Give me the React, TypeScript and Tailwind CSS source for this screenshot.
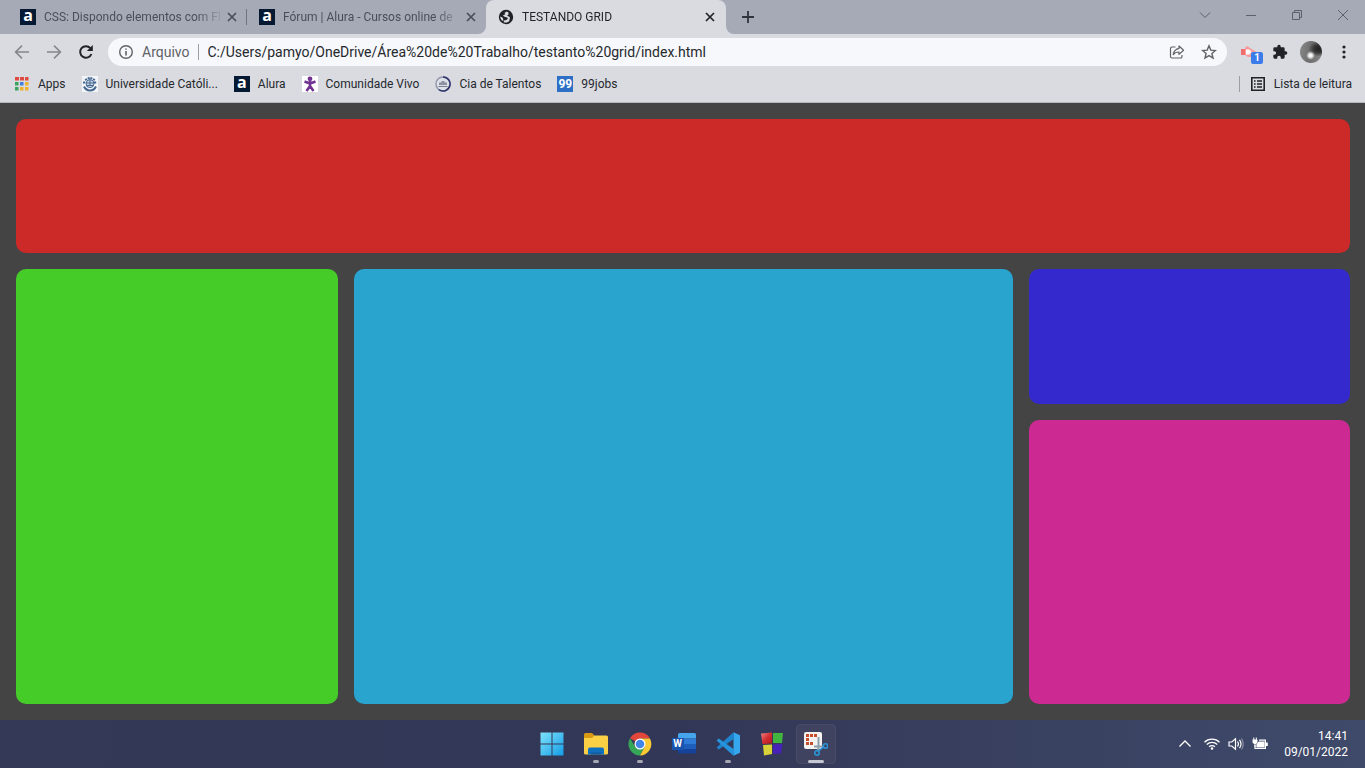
import type { ReactNode } from "react";

function AluraIcon() {
  return (
    <span className="flex h-4 w-4 shrink-0 items-center justify-center bg-[#051933] font-['Open_Sans',sans-serif] text-base leading-4 font-bold text-white">
      <span className="-mt-1">a</span>
    </span>
  );
}

function GlobeIcon() {
  return (
    <svg viewBox="0 0 16 16" className="h-4 w-4 shrink-0">
      <circle cx="8" cy="8" r="7.2" fill="#1f2227" />
      <path d="M8.8 2.6 6.4 4 7.4 5.2 4.8 6.6 7 8 9.4 8.6 9.8 10 7.8 11.2 5.4 11.4 6.2 13.4 9 13.6 11.2 12.2 11.6 10.2 12 8.6 10.4 7.2 9 6.6 10.6 5.4 10.4 3.6Z" fill="#d9dbe1" />
      <path d="M2.2 7.6 4.4 8.4 5.4 10.2 4.4 12C3 11 2.3 9.4 2.2 7.6Z" fill="#d9dbe1" />
    </svg>
  );
}

function CloseIcon() {
  return (
    <svg viewBox="0 0 10 10" className="h-[10px] w-[10px]" stroke="currentColor" strokeWidth="1.7">
      <path d="M1 1 9 9M9 1 1 9" />
    </svg>
  );
}

function Tab({ icon, title, active }: { icon: ReactNode; title: string; active?: boolean }) {
  return (
    <div
      className={
        active
          ? "relative flex h-[34px] w-[240px] items-center rounded-t-lg bg-[#d9dbe1] pr-[11px] pl-3 text-[#1f2227]"
          : "flex h-[34px] w-[239px] items-center pr-[10px] pl-3 text-[#4a4e59]"
      }
    >
      {icon}
      <button
        role="tab"
        aria-selected={!!active}
        className="ml-2 min-w-0 flex-1 text-left text-xs whitespace-nowrap [mask-image:linear-gradient(to_right,black_152px,transparent_180px)]"
      >
        {title}
      </button>
      <button aria-label="Fechar guia" className="ml-1 flex h-4 w-[10px] items-center justify-center">
        <CloseIcon />
      </button>
      {active && (
        <>
          <svg viewBox="0 0 8 8" className="absolute bottom-0 -left-2 h-2 w-2" fill="#d9dbe1">
            <path d="M8 0V8H0A8 8 0 0 0 8 0Z" />
          </svg>
          <svg viewBox="0 0 8 8" className="absolute -right-2 bottom-0 h-2 w-2" fill="#d9dbe1">
            <path d="M0 0V8H8A8 8 0 0 1 0 0Z" />
          </svg>
        </>
      )}
    </div>
  );
}

function TabStrip() {
  return (
    <div className="flex h-[34px] shrink-0 items-center bg-[#a6aab7] pl-2">
      <div role="tablist" className="flex items-center">
        <Tab icon={<AluraIcon />} title="CSS: Dispondo elementos com Fl" />
        <div className="-ml-px h-4 w-px bg-[#70747f]" />
        <Tab icon={<AluraIcon />} title="Fórum | Alura - Cursos online de" />
        <Tab icon={<GlobeIcon />} title="TESTANDO GRID" active />
      </div>
      <button aria-label="Nova guia" className="ml-4 text-[#30333b]">
        <svg viewBox="0 0 12 12" className="h-3 w-3" stroke="currentColor" strokeWidth="1.8">
          <path d="M6 0V12M0 6H12" />
        </svg>
      </button>
      <div className="mr-4 mb-1 ml-auto flex items-center gap-[34px] text-[#5c606b]">
        <button aria-label="Pesquisar guias">
          <svg viewBox="0 0 12 12" className="h-3 w-3" fill="none" stroke="currentColor">
            <path d="M1 3.5 6 8.5 11 3.5" />
          </svg>
        </button>
        <button aria-label="Minimizar">
          <svg viewBox="0 0 12 12" className="h-3 w-3" stroke="currentColor">
            <path d="M1 6.5H11" />
          </svg>
        </button>
        <button aria-label="Restaurar">
          <svg viewBox="0 0 12 12" className="h-3 w-3" fill="none" stroke="currentColor">
            <path d="M1.5 3.5H8.5V10.5H1.5ZM3.5 3.5V1.5H10.5V8.5H8.5" />
          </svg>
        </button>
        <button aria-label="Fechar">
          <svg viewBox="0 0 12 12" className="h-3 w-3" stroke="currentColor">
            <path d="M1 1 11 11M11 1 1 11" />
          </svg>
        </button>
      </div>
    </div>
  );
}

function Toolbar() {
  return (
    <div className="flex h-9 shrink-0 items-center bg-[#d9dbe1] pr-[13px] pl-[14px]">
      <div className="flex items-center gap-4">
        <button aria-label="Voltar" className="text-[#85878d]">
          <svg viewBox="0 0 16 16" className="h-4 w-4" fill="none" stroke="currentColor" strokeWidth="1.6">
            <path d="M15 8H2M8 1.6 1.6 8 8 14.4" />
          </svg>
        </button>
        <button aria-label="Avançar" className="text-[#85878d]">
          <svg viewBox="0 0 16 16" className="h-4 w-4" fill="none" stroke="currentColor" strokeWidth="1.6">
            <path d="M1 8H14M8 1.6 14.4 8 8 14.4" />
          </svg>
        </button>
        <button aria-label="Atualizar" className="text-[#1f2227]">
          <svg viewBox="0 0 16 16" className="h-4 w-4" fill="none" stroke="currentColor" strokeWidth="2">
            <path d="M13.4 10A5.8 5.8 0 1 1 12.4 4.2" />
            <path d="M14.8 1V7H8.8Z" fill="currentColor" stroke="none" />
          </svg>
        </button>
      </div>
      <div className="ml-[14px] flex h-7 min-w-0 flex-1 items-center rounded-full bg-[#f7f8fb] pr-[10px] pl-[10px] text-sm text-[#5f6267]">
        <svg viewBox="0 0 16 16" className="h-4 w-4" fill="none" stroke="currentColor" strokeWidth="1.4">
          <circle cx="8" cy="8" r="6.3" />
          <path d="M8 7V11.4M8 4.4V5.8" strokeWidth="1.6" />
        </svg>
        <label htmlFor="address" className="ml-2">Arquivo</label>
        <div className="ml-2 h-4 w-px bg-[#9b9ea5]" />
        <input
          id="address"
          className="ml-[9px] min-w-0 flex-1 bg-transparent text-[#25282d] outline-none"
          defaultValue="C:/Users/pamyo/OneDrive/Área%20de%20Trabalho/testanto%20grid/index.html"
        />
        <button aria-label="Compartilhar">
          <svg viewBox="0 0 16 16" className="h-4 w-4" fill="none" stroke="currentColor" strokeWidth="1.2" strokeLinejoin="round">
            <path d="M6.5 3H3A1.6 1.6 0 0 0 1.5 4.6V12.4A1.6 1.6 0 0 0 3 14H11.4A1.6 1.6 0 0 0 13 12.4V11" />
            <path d="M10 2 14.6 6.2 10 10.4V8C7.4 8 5.6 8.8 4.2 10.6 4.8 7.4 6.6 5 10 4.4Z" />
          </svg>
        </button>
        <button aria-label="Adicionar aos favoritos" className="ml-4">
          <svg viewBox="0 0 16 16" className="h-4 w-4" fill="none" stroke="currentColor" strokeWidth="1.4">
            <path d="M8 1.8 9.8 6.1 14.4 6.5 10.9 9.5 12 14 8 11.6 4 14 5.1 9.5 1.6 6.5 6.2 6.1Z" />
          </svg>
        </button>
      </div>
      <button aria-label="Extensão" className="relative ml-[14px]">
        <svg viewBox="0 0 17 16" className="h-4 w-[17px]">
          <path d="M0 5H4V11H0Z" fill="#f26d6d" />
          <path d="M4 3.5 6.5 2 9 4 16.500 8.500 10 9V13H7L4 11Z" fill="#f79b9b" />
          <path d="M5 5.5H8.500L10.500 8 8.500 10.500H5Z" fill="#fff" />
        </svg>
        <span className="absolute top-2 left-[10px] h-3 w-3 rounded-xs bg-[#3b7cea] text-center text-[10px] leading-3 font-bold text-white">1</span>
      </button>
      <button aria-label="Extensões" className="ml-[14px] text-[#1f2227]">
        <svg viewBox="0 0 24 24" className="h-4 w-4" fill="currentColor">
          <path d="M20.5 11H19V7a2 2 0 0 0-2-2h-4V3.500a2.500 2.500 0 0 0-5 0V5H4a2 2 0 0 0-2 2v3.800h1.500a2.700 2.700 0 0 1 0 5.400H2V20a2 2 0 0 0 2 2h3.800v-1.500a2.700 2.700 0 0 1 5.400 0V22H17a2 2 0 0 0 2-2v-4h1.500a2.500 2.500 0 0 0 0-5Z" />
        </svg>
      </button>
      <button
        aria-label="Perfil"
        className="ml-3 h-[22px] w-[22px] rounded-full bg-[radial-gradient(circle_at_48%_66%,#fff_0,#eee_9%,transparent_24%),radial-gradient(ellipse_at_85%_35%,#222_0,#333_18%,transparent_38%),linear-gradient(100deg,#8a8a8a,#6c6c6c_50%,#8a8a8a)]"
      />
      <button aria-label="Menu" className="ml-[14px] text-[#1f2227]">
        <svg viewBox="0 0 16 16" className="h-4 w-4" fill="currentColor">
          <circle cx="8" cy="3" r="1.6" />
          <circle cx="8" cy="8" r="1.6" />
          <circle cx="8" cy="13" r="1.6" />
        </svg>
      </button>
    </div>
  );
}

function AppsIcon() {
  return (
    <svg viewBox="0 0 16 16" className="h-4 w-4">
      <path d="M1 1H5V4.500H1ZM6 1H10V4.500H6ZM11 1H14.500V4.500H11Z" fill="#df4a40" />
      <path d="M1 6H4.500V9.500H1ZM1 11H4.500V14.500H1Z" fill="#39a35b" />
      <path d="M6 6H9.500V9.500H6Z" fill="#3e7fe0" />
      <path d="M11 6H14.500V9.500H11ZM6 11H9.500V14.500H6ZM11 11H14.500V14.500H11Z" fill="#eeb22f" />
    </svg>
  );
}

function UniversityIcon() {
  return (
    <svg viewBox="0 0 16 16" className="h-4 w-4" fill="none" stroke="#45678f">
      <path d="M0 0H16V16H0Z" fill="#f1f5f8" stroke="none" />
      <path d="M3 4 8 1.500 13 4M1 6.500H4M12 6.500H15" strokeWidth="1.800" strokeDasharray="2.200 0.800" />
      <circle cx="8" cy="7.600" r="4" fill="#c8d8e8" />
      <path d="M4 7H12M5 9.500H11M8 3.500V10" />
      <path d="M2 10.500Q4 14.500 8 14.500T14 10.500" strokeWidth="2" />
    </svg>
  );
}

function VivoIcon() {
  return (
    <svg viewBox="0 0 16 16" className="h-4 w-4">
      <path d="M0 0H16V16H0Z" fill="#fff" />
      <circle cx="8" cy="2.800" r="2.400" fill="#713292" />
      <path d="M2.500 5.500 6.500 7 8 6 9.500 7 13.500 5.500M8 7V10.500M8 10 4.500 15M8 10 11.500 15" fill="none" stroke="#713292" strokeWidth="2.600" strokeLinejoin="round" />
    </svg>
  );
}

function TalentosIcon() {
  return (
    <svg viewBox="0 0 16 16" className="h-4 w-4" fill="none">
      <circle cx="8" cy="8" r="7" fill="#dfe1e9" stroke="#8f94aa" strokeWidth="1.400" />
      <path d="M8 1A7 7 0 1 1 4 13.700" stroke="#30366d" strokeWidth="1.600" />
      <path d="M4 9V6.500H6.500V5H9.500V6.500H12V9Z" fill="#8b90a2" />
      <path d="M3.500 10.500H12.500" stroke="#777c91" />
    </svg>
  );
}

const bookmarks = [
  { label: "Apps", icon: <AppsIcon /> },
  { label: "Universidade Católi...", icon: <UniversityIcon /> },
  { label: "Alura", icon: <AluraIcon /> },
  { label: "Comunidade Vivo", icon: <VivoIcon /> },
  { label: "Cia de Talentos", icon: <TalentosIcon /> },
  {
    label: "99jobs",
    icon: <span className="h-4 w-4 bg-[#2c6fc4] text-center text-xs leading-4 font-bold text-white">99</span>,
  },
];

function BookmarksBar() {
  return (
    <nav className="flex h-[33px] shrink-0 items-center border-b border-[#b5b7bd] bg-[#d9dbe1] pr-[13px] pb-[5px] pl-[14px] text-xs text-[#25282d]">
      <div className="flex items-center gap-4">
        {bookmarks.map((b) => (
          <a key={b.label} href="#" className="flex items-center gap-2 whitespace-nowrap">
            {b.icon}
            {b.label}
          </a>
        ))}
      </div>
      <div className="ml-auto h-4 w-px bg-[#9b9ea5]" />
      <button className="ml-[10px] flex items-center gap-2 whitespace-nowrap">
        <svg viewBox="0 0 16 16" className="h-4 w-4" fill="none" stroke="#1f2227" strokeWidth="1.600">
          <path d="M1.800 1.800H14.200V14.200H1.800Z" />
          <path d="M4 5H5.600M7 5H12M4 8H5.600M7 8H12M4 11H5.600M7 11H12" />
        </svg>
        Lista de leitura
      </button>
    </nav>
  );
}

function GridPage() {
  return (
    <main className="grid min-h-0 flex-1 grid-cols-4 grid-rows-4 gap-4 bg-[#444444] py-4 pr-[15px] pl-4">
      <div className="col-span-4 rounded-[10px] bg-[#cc2929]" />
      <div className="row-span-3 rounded-[10px] bg-[#45cc29]" />
      <div className="col-span-2 row-span-3 rounded-[10px] bg-[#29a4cf]" />
      <div className="rounded-[10px] bg-[#3429cc]" />
      <div className="row-span-2 rounded-[10px] bg-[#cc2993]" />
    </main>
  );
}

function WindowsIcon() {
  return (
    <svg viewBox="0 0 24 24" className="h-6 w-6">
      <defs>
        <linearGradient id="win" x1="0" y1="0" x2="1" y2="1">
          <stop offset="0" stopColor="#7fe3fb" />
          <stop offset="1" stopColor="#159be6" />
        </linearGradient>
      </defs>
      <path d="M0.500 0.500H11.500V11.500H0.500ZM12.500 0.500H23.500V11.500H12.500ZM0.500 12.500H11.500V23.500H0.500ZM12.500 12.500H23.500V23.500H12.500Z" fill="url(#win)" />
    </svg>
  );
}

function FolderIcon() {
  return (
    <svg viewBox="0 0 24 24" className="h-6 w-6">
      <path d="M0 2.500A1.500 1.500 0 0 1 1.500 1H8L10.500 3.500V7H0Z" fill="#d99a12" />
      <path d="M0 6H8L10.500 3.500H22.500A1.500 1.500 0 0 1 24 5V21A1.500 1.500 0 0 1 22.500 22.500H1.500A1.500 1.500 0 0 1 0 21Z" fill="#fbd044" />
      <path d="M4 22.500V17.500A2 2 0 0 1 6 15.500H18A2 2 0 0 1 20 17.500V22.500Z" fill="#0f70bf" />
      <path d="M7 22.500V20.500H17V22.500Z" fill="#155b9c" />
    </svg>
  );
}

function ChromeIcon() {
  return (
    <svg viewBox="0 0 24 24" className="h-6 w-6">
      <path d="M12 12 2.040 6.250A11.500 11.500 0 0 1 21.960 6.250L22 6.500H12Z" fill="#e2473b" />
      <path d="M2.040 6.250A11.500 11.500 0 0 0 12 23.500L16.760 14.750 12 12 7.240 14.750Z" fill="#35a557" />
      <path d="M12 6.500H21.960A11.500 11.500 0 0 1 12 23.500L16.760 14.750Z" fill="#fbc934" />
      <circle cx="12" cy="12" r="5.500" fill="#fff" />
      <circle cx="12" cy="12" r="4.300" fill="#4285e8" />
    </svg>
  );
}

function WordIcon() {
  return (
    <span className="relative flex h-6 w-6 items-center">
      <svg viewBox="0 0 24 24" className="h-6 w-6">
        <path d="M6 2.500A1.500 1.500 0 0 1 7.500 1H22.500A1.500 1.500 0 0 1 24 2.500V6.500H6Z" fill="#45a6ee" />
        <path d="M6 6.500H24V12H6Z" fill="#2f7cd8" />
        <path d="M6 12H24V17H6Z" fill="#1f5fbc" />
        <path d="M6 17H24V20A1.500 1.500 0 0 1 22.500 21.500H7.500A1.500 1.500 0 0 1 6 20Z" fill="#15429a" />
        <path d="M0 6H12V18H0Z" fill="#1754ae" />
      </svg>
      <span className="absolute top-[6px] left-0 w-3 text-center text-[10px] leading-3 font-bold text-white">W</span>
    </span>
  );
}

function CodeIcon() {
  return (
    <svg viewBox="0 0 24 24" className="h-6 w-6">
      <path d="M17.500 0.300 24 3.200V20.800L17.500 23.700Z" fill="#35a7ef" />
      <path d="M17.500 0.300 0.600 15.600 2.700 17.500 18 6.800Z" fill="#1e84ce" />
      <path d="M17.500 23.700 0.600 8.400 2.700 6.500 18 17.200Z" fill="#2694dd" />
    </svg>
  );
}

function BlocksIcon() {
  return (
    <svg viewBox="0 0 24 24" className="h-6 w-6">
      <defs>
        <linearGradient id="red" x1="0" y1="0" x2="1" y2="1">
          <stop offset="0" stopColor="#f08a84" />
          <stop offset="0.500" stopColor="#d62f33" />
          <stop offset="1" stopColor="#a91a20" />
        </linearGradient>
      </defs>
      <path d="M1 1.500 12 0.500V11.500L2.500 12Z" fill="url(#red)" />
      <path d="M13 1H23L22 11H13Z" fill="#42b53e" />
      <path d="M3 13 12 12.500V22L4 23.500Z" fill="#d7d339" />
      <path d="M13 12.500 22.500 12 21 21.500 13 22Z" fill="#4721b8" />
    </svg>
  );
}

function SnippingIcon() {
  return (
    <svg viewBox="0 0 24 24" className="h-6 w-6">
      <path d="M2 0H16A2 2 0 0 1 18 2V17H2A2 2 0 0 1 0 15V2A2 2 0 0 1 2 0Z" fill="#f5f2f2" />
      <path d="M2 2H5V5H2ZM6 2H9V5H6ZM10 2H13V5H10ZM2 6H5V9H2ZM2 10H5V13H2ZM6 10H9V13H6Z" fill="#c54d2c" />
      <path d="M14.500 5V16L13.500 19M10 14.500H19.500" fill="none" stroke="#8da0a9" strokeWidth="2" />
      <circle cx="13" cy="21" r="2.200" fill="none" stroke="#2995d8" strokeWidth="1.600" />
      <circle cx="21.500" cy="14" r="2.200" fill="none" stroke="#2995d8" strokeWidth="1.600" />
      <path d="M14.500 19 19.500 15" stroke="#2995d8" strokeWidth="1.600" />
    </svg>
  );
}

const apps = [
  { name: "Iniciar", icon: <WindowsIcon /> },
  { name: "Explorador de Arquivos", icon: <FolderIcon />, running: true },
  { name: "Google Chrome", icon: <ChromeIcon />, running: true },
  { name: "Word", icon: <WordIcon /> },
  { name: "Visual Studio Code", icon: <CodeIcon />, running: true },
  { name: "Code::Blocks", icon: <BlocksIcon /> },
  { name: "Ferramenta de Captura", icon: <SnippingIcon />, active: true },
];

function Taskbar() {
  return (
    <footer className="grid h-12 shrink-0 grid-cols-[1fr_auto_1fr] items-center bg-linear-to-r from-[#343957] via-[#333757] to-[#3f4a6a] pr-[17px] pl-[19px] text-white">
      <div className="col-start-2 flex gap-1">
        {apps.map((app) => (
          <button
            key={app.name}
            aria-label={app.name}
            className={
              app.active
                ? "relative flex h-10 w-10 items-center justify-center rounded-sm border border-[#474b68] bg-[#3f435f]"
                : "relative flex h-10 w-10 items-center justify-center"
            }
          >
            {app.icon}
            {app.running && <span className="absolute bottom-px h-[3px] w-[6px] rounded-full bg-[#a6a8b4]" />}
            {app.active && <span className="absolute bottom-0 h-[3px] w-4 rounded-full bg-[#c6c8d2]" />}
          </button>
        ))}
      </div>
      <div className="flex items-center justify-end">
        <button aria-label="Mostrar ícones ocultos">
          <svg viewBox="0 0 14 14" className="h-[14px] w-[14px]" fill="none" stroke="currentColor" strokeWidth="1.300">
            <path d="M1.500 9.500 7 4 12.500 9.500" />
          </svg>
        </button>
        <button aria-label="Rede, som e bateria" className="ml-3 flex items-center gap-2">
          <svg viewBox="0 0 16 16" className="h-4 w-4" fill="none" stroke="currentColor" strokeWidth="1.300">
            <path d="M0.500 6.200A10.600 10.600 0 0 1 15.500 6.200M2.800 8.500A7.400 7.400 0 0 1 13.200 8.500M5.100 10.800A4.100 4.100 0 0 1 10.900 10.800" />
            <circle cx="8" cy="12.500" r="1.300" fill="currentColor" stroke="none" />
          </svg>
          <svg viewBox="0 0 16 16" className="h-4 w-4" fill="none" stroke="currentColor" strokeWidth="1.200">
            <path d="M1 6H3.800L7.500 2.800V13.200L3.800 10H1ZM9.500 5.500Q11.500 8 9.500 10.500M11.500 3.800Q14.500 8 11.500 12.200" />
            <path d="M13.500 2.500Q17 8 13.500 13.500" opacity="0.400" />
          </svg>
          <svg viewBox="0 0 16 16" className="h-4 w-4" fill="none" stroke="currentColor" strokeWidth="1.200">
            <path d="M7 4.200H13.400V12.500H3V9" />
            <path d="M7 6H12V11H5V8.500Z" fill="currentColor" />
            <path d="M14 6.500H15.800V10H14ZM0.500 3.500H5.500V6.500L4 8H2L0.500 6.500ZM1.300 1.500H2.300V4H1.300ZM3.800 1.500H4.800V4H3.800ZM2.500 8H3.500V11H2.500Z" fill="currentColor" stroke="none" />
          </svg>
        </button>
        <div className="ml-4 text-right text-xs leading-4">
          <div>14:41</div>
          <div>09/01/2022</div>
        </div>
      </div>
    </footer>
  );
}

export default function App() {
  return (
    <div className="flex h-screen flex-col overflow-hidden font-[Roboto,'Open_Sans',sans-serif]">
      <header>
        <TabStrip />
        <Toolbar />
        <BookmarksBar />
      </header>
      <GridPage />
      <Taskbar />
    </div>
  );
}
